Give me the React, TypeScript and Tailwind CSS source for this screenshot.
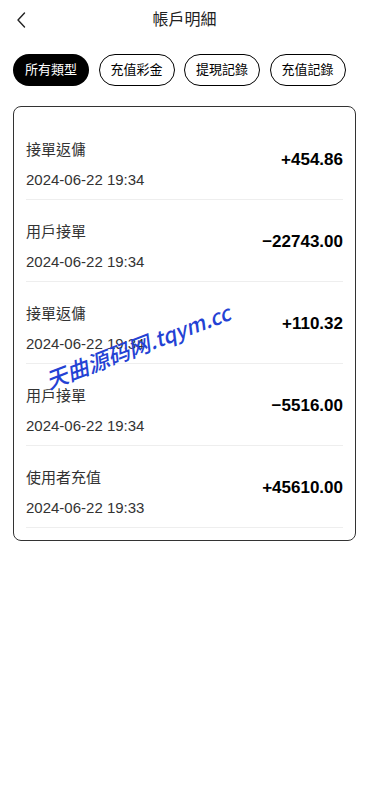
import React from "react";

const rows = [
  { title: "接單返傭", date: "2024-06-22 19:34", amount: "+454.86" },
  { title: "用戶接單", date: "2024-06-22 19:34", amount: "−22743.00" },
  { title: "接單返傭", date: "2024-06-22 19:34", amount: "+110.32" },
  { title: "用戶接單", date: "2024-06-22 19:34", amount: "−5516.00" },
  { title: "使用者充值", date: "2024-06-22 19:33", amount: "+45610.00" },
];

const tabs = ["所有類型", "充值彩金", "提現記錄", "充值記錄"];

export default function App() {
  return (
    <div
      className="relative w-[369px] h-[802px] bg-white overflow-hidden text-black"
      style={{ fontFamily: '"Liberation Sans", "Noto Sans CJK TC", sans-serif' }}
    >
      <div className="relative h-[40px] flex items-center justify-center">
        <svg className="absolute left-[15px] top-[11px]" width="12" height="18" viewBox="0 0 12 18" fill="none">
          <path d="M9.5 2 L3 9 L9.5 16" stroke="#222" strokeWidth="1.4" strokeLinecap="round" strokeLinejoin="round" />
        </svg>
        <span className="text-[16px] text-[#222]">帳戶明細</span>
      </div>
      <div className="flex gap-[9.5px] px-[13px] mt-[14px]">
        {tabs.map((t, i) => (
          <div
            key={t}
            className={
              i === 0
                ? "w-[76px] h-[32px] rounded-full bg-black text-white text-[13px] flex items-center justify-center"
                : "w-[76px] h-[32px] rounded-full border border-black text-black text-[13px] flex items-center justify-center"
            }
          >
            {t}
          </div>
        ))}
      </div>
      <div className="mx-[13px] mt-[20px] border border-[#333] rounded-[8px] px-[12px] pt-[11px] pb-[12px]">
        {rows.map((r, i) => (
          <div key={i} className="flex items-center justify-between border-b border-[#eeeeee] pt-[22px] pb-[9px]">
            <div className="flex flex-col gap-[10px]">
              <span className="text-[15px] leading-[20px] text-[#333]">{r.title}</span>
              <span className="text-[15px] leading-[20px] text-[#333]">{r.date}</span>
            </div>
            <span className="text-[17px] font-bold text-black mt-[-10px]">{r.amount}</span>
          </div>
        ))}
      </div>
      <div
        className="absolute left-[35px] top-[329px] w-[205px] text-center italic font-medium text-[#2442d4] whitespace-nowrap"
        style={{ transform: "rotate(-21deg)", fontFamily: '"Noto Sans CJK SC", sans-serif' }}
      >
        <span className="text-[22px]">天曲源码网</span>
        <span className="text-[21px]">.tqym.cc</span>
      </div>
    </div>
  );
}
